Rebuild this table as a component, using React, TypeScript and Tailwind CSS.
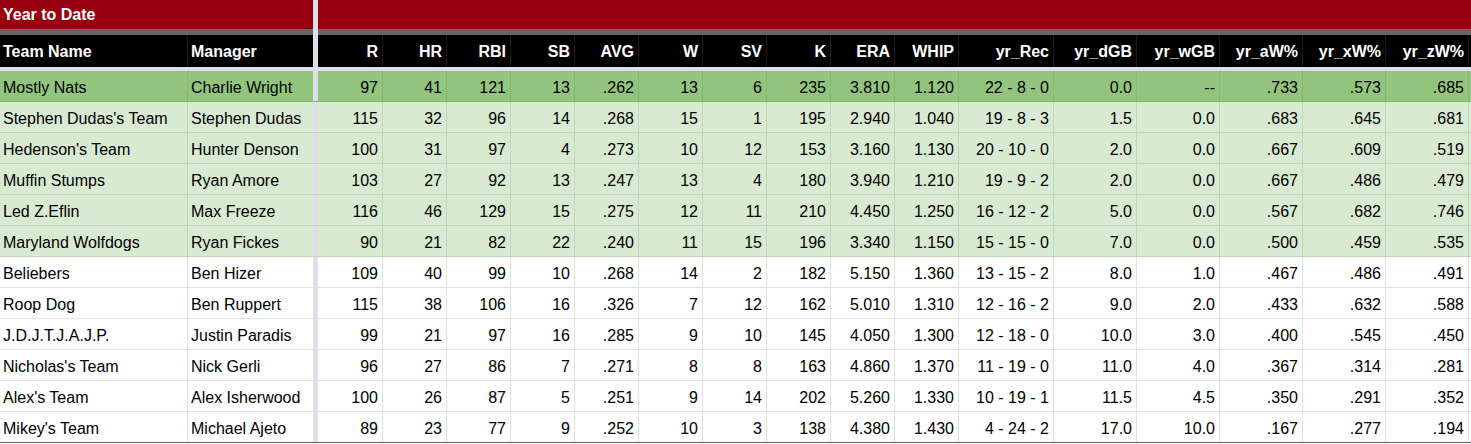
import React from "react"

type Row = {
  team: string
  manager: string
  stats: string[]
  tone: "lead" | "playoff" | "plain"
}

const statCols = [
  { label: "R", w: "w-[65px]" },
  { label: "HR", w: "w-[64px]" },
  { label: "RBI", w: "w-[64px]" },
  { label: "SB", w: "w-[64px]" },
  { label: "AVG", w: "w-[64px]" },
  { label: "W", w: "w-[64px]" },
  { label: "SV", w: "w-[64px]" },
  { label: "K", w: "w-[64px]" },
  { label: "ERA", w: "w-[64px]" },
  { label: "WHIP", w: "w-[64px]" },
  { label: "yr_Rec", w: "w-[95px]" },
  { label: "yr_dGB", w: "w-[83px]" },
  { label: "yr_wGB", w: "w-[83px]" },
  { label: "yr_aW%", w: "w-[83px]" },
  { label: "yr_xW%", w: "w-[83px]" },
  { label: "yr_zW%", w: "w-[83px]" },
]

const rows: Row[] = [
  { team: "Mostly Nats", manager: "Charlie Wright", tone: "lead", stats: ["97", "41", "121", "13", ".262", "13", "6", "235", "3.810", "1.120", "22 - 8 - 0", "0.0", "--", ".733", ".573", ".685"] },
  { team: "Stephen Dudas's Team", manager: "Stephen Dudas", tone: "playoff", stats: ["115", "32", "96", "14", ".268", "15", "1", "195", "2.940", "1.040", "19 - 8 - 3", "1.5", "0.0", ".683", ".645", ".681"] },
  { team: "Hedenson's Team", manager: "Hunter Denson", tone: "playoff", stats: ["100", "31", "97", "4", ".273", "10", "12", "153", "3.160", "1.130", "20 - 10 - 0", "2.0", "0.0", ".667", ".609", ".519"] },
  { team: "Muffin Stumps", manager: "Ryan Amore", tone: "playoff", stats: ["103", "27", "92", "13", ".247", "13", "4", "180", "3.940", "1.210", "19 - 9 - 2", "2.0", "0.0", ".667", ".486", ".479"] },
  { team: "Led Z.Eflin", manager: "Max Freeze", tone: "playoff", stats: ["116", "46", "129", "15", ".275", "12", "11", "210", "4.450", "1.250", "16 - 12 - 2", "5.0", "0.0", ".567", ".682", ".746"] },
  { team: "Maryland Wolfdogs", manager: "Ryan Fickes", tone: "playoff", stats: ["90", "21", "82", "22", ".240", "11", "15", "196", "3.340", "1.150", "15 - 15 - 0", "7.0", "0.0", ".500", ".459", ".535"] },
  { team: "Beliebers", manager: "Ben Hizer", tone: "plain", stats: ["109", "40", "99", "10", ".268", "14", "2", "182", "5.150", "1.360", "13 - 15 - 2", "8.0", "1.0", ".467", ".486", ".491"] },
  { team: "Roop Dog", manager: "Ben Ruppert", tone: "plain", stats: ["115", "38", "106", "16", ".326", "7", "12", "162", "5.010", "1.310", "12 - 16 - 2", "9.0", "2.0", ".433", ".632", ".588"] },
  { team: "J.D.J.T.J.A.J.P.", manager: "Justin Paradis", tone: "plain", stats: ["99", "21", "97", "16", ".285", "9", "10", "145", "4.050", "1.300", "12 - 18 - 0", "10.0", "3.0", ".400", ".545", ".450"] },
  { team: "Nicholas's Team", manager: "Nick Gerli", tone: "plain", stats: ["96", "27", "86", "7", ".271", "8", "8", "163", "4.860", "1.370", "11 - 19 - 0", "11.0", "4.0", ".367", ".314", ".281"] },
  { team: "Alex's Team", manager: "Alex Isherwood", tone: "plain", stats: ["100", "26", "87", "5", ".251", "9", "14", "202", "5.260", "1.330", "10 - 19 - 1", "11.5", "4.5", ".350", ".291", ".352"] },
  { team: "Mikey's Team", manager: "Michael Ajeto", tone: "plain", stats: ["89", "23", "77", "9", ".252", "10", "3", "138", "4.380", "1.430", "4 - 24 - 2", "17.0", "10.0", ".167", ".277", ".194"] },
]

const toneStyles = {
  lead: "bg-[#93c47d] border-[#86b670]",
  playoff: "bg-[#d9ead3] border-[#c0d6b6]",
  plain: "bg-white border-[#e2e2e2]",
}

function Sep() {
  return <div className="w-[5px] shrink-0 self-stretch bg-[#dde0e8]" />
}

function DataRow({ row, last }: { row: Row; last: boolean }) {
  const tone = toneStyles[row.tone]
  const cell = "flex items-end pb-[4px] leading-[18px] border-r shrink-0 " + tone
  return (
    <div className={"flex h-[31px] border-b " + (last ? "border-[#5f5f5f]" : tone)}>
      <div className={cell + " w-[188px] pl-[3px]"}>{row.team}</div>
      <div className={cell + " w-[125px] pl-[3px] border-r-0"}>{row.manager}</div>
      <Sep />
      {row.stats.map((v, i) => (
        <div key={i} className={cell + " justify-end pr-[4px] " + statCols[i].w}>
          {v}
        </div>
      ))}
      <div className={"flex-1 " + tone} />
    </div>
  )
}

export default function App() {
  return (
    <div className="w-[1471px] h-[444px] overflow-hidden bg-white text-[16px] text-black font-['Liberation_Sans',Arial,sans-serif]">
      <div className="flex h-[29px] bg-[#99000f]">
        <div className="w-[313px] flex items-end pb-[5px] pl-[3px] leading-[18px] font-bold text-white">
          Year to Date
        </div>
        <Sep />
        <div className="flex-1" />
      </div>

      <div className="flex h-[6px] bg-[#666666]">
        <div className="w-[313px]" />
        <Sep />
        <div className="flex-1" />
      </div>

      <div className="flex h-[32px] bg-black text-white font-bold">
        <div className="w-[188px] flex items-end pb-[6px] pl-[3px] leading-[18px] border-r border-[#1c1c1c]">
          Team Name
        </div>
        <div className="w-[125px] flex items-end pb-[6px] pl-[3px] leading-[18px]">Manager</div>
        <Sep />
        {statCols.map((c) => (
          <div
            key={c.label}
            className={"flex items-end justify-end pb-[6px] pr-[4px] leading-[18px] border-r border-[#1c1c1c] shrink-0 " + c.w}
          >
            {c.label}
          </div>
        ))}
        <div className="flex-1" />
      </div>

      <div className="h-[4px] bg-[#dde0e8]" />

      {rows.map((r, i) => (
        <DataRow key={r.team} row={r} last={i === rows.length - 1} />
      ))}
    </div>
  )
}
